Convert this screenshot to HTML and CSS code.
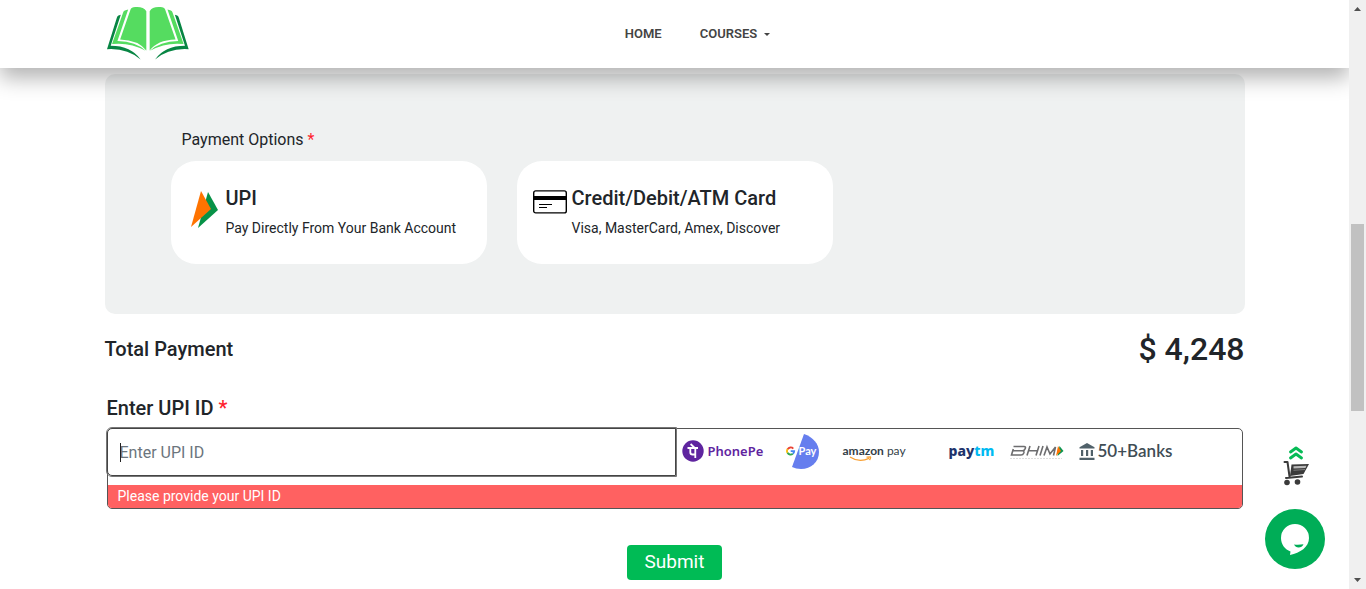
FILE: index.html
```html
<!DOCTYPE html>
<html lang="en">
<head>
<meta charset="utf-8">
<meta name="viewport" content="width=device-width, initial-scale=1">
<title>Checkout</title>
<link rel="stylesheet" href="styles.css">
</head>
<body>
<div class="page">
  <header class="header">
    <div class="container header-row">
      <a class="logo" href="#" aria-label="Home page">
        <svg viewBox="38 18 244 160" width="82" height="54" aria-hidden="true">
          <g>
            <path fill="#55dc60" d="M155 150V33Q146 19 122 21Q110 22 108 28L77 117Q132 119 155 150Z"/>
            <path fill="#55dc60" d="M101 28L91 31Q87 33 86 37L53 131Q106 125 153 151Q125 124 69 122Z"/>
            <path fill="#078543" d="M79 44L72 46Q68 48 67 53L38 146Q98 142 138 177Q110 136 49 136Z"/>
          </g>
          <g transform="translate(319 0) scale(-1 1)">
            <path fill="#55dc60" d="M154 150V33Q146 19 122 21Q110 22 108 28L77 117Q132 119 154 150Z"/>
            <path fill="#55dc60" d="M101 28L91 31Q87 33 86 37L53 131Q106 125 153 151Q125 124 69 122Z"/>
            <path fill="#078543" d="M79 44L72 46Q68 48 67 53L38 146Q98 142 138 177Q110 136 49 136Z"/>
          </g>
        </svg>
      </a>
      <nav class="nav">
        <a href="#">HOME</a>
        <a href="#">COURSES <span class="nav-caret"></span></a>
      </nav>
    </div>
  </header>

  <main class="container">
    <section class="panel">
      <h2 class="panel-label">Payment Options <span class="required">*</span></h2>
      <div class="options">
        <button class="option" type="button">
          <svg class="option-icon upi-icon" viewBox="0 0 27 38" width="27" height="38" aria-hidden="true">
            <path fill="#079247" d="M17 1L27 19L7 37Z"/>
            <path fill="#ff7300" d="M10 0L20 18L0 36Z"/>
          </svg>
          <span class="option-text">
            <span class="option-title">UPI</span>
            <span class="option-note">Pay Directly From Your Bank Account</span>
          </span>
        </button>
        <button class="option option-card" type="button">
          <svg class="option-icon" viewBox="0 0 34 24" width="34" height="24" aria-hidden="true">
            <rect x=".7" y=".9" width="32.6" height="22" rx="2" fill="none" stroke="#000" stroke-width="1.4"/>
            <path fill="#000" d="M1 6h32v4H1z"/>
            <path stroke="#000" stroke-width="1.2" d="M6 14.5h13M6 17.5h8"/>
          </svg>
          <span class="option-text">
            <span class="option-title">Credit/Debit/ATM Card</span>
            <span class="option-note">Visa, MasterCard, Amex, Discover</span>
          </span>
        </button>
      </div>
    </section>

    <section class="total">
      <h2 class="total-label">Total Payment</h2>
      <strong class="total-amount">$ 4,248</strong>
    </section>

    <form class="upi-form">
      <label class="upi-label" for="upi">Enter UPI ID <span class="required">*</span></label>
      <div class="upi-box">
        <div class="upi-row">
          <div class="upi-field">
            <input class="upi-input" id="upi" type="text" placeholder="Enter UPI ID" aria-describedby="upi-error">
            <span class="text-caret"></span>
          </div>
          <div class="brands">
            <span class="brand phonepe">
              <svg viewBox="0 0 22 22" width="22" height="22" aria-hidden="true">
                <circle cx="11" cy="11" r="10.7" fill="#5f259f"/>
                <path fill="none" stroke="#fff" stroke-width="1.8" d="M5.500 8h10.500M8.300 8v4.200q0 2.300 2.300 2.300h3M13.300 8v10M8.600 4l3.800 3.600"/>
              </svg>
              PhonePe
            </span>
            <span class="brand gpay">
              <svg viewBox="0 0 34 36" width="34" height="36" aria-hidden="true">
                <path fill="#667eee" d="M18 1C27 4 33 11 33 19C33 29 25 36 15 36Q10 36 6 34Z"/>
                <g fill="none" stroke-width="1.8">
                  <path stroke="#ea4335" d="M7.300 15.600A3.600 3.600 0 0 0 1.600 16.200"/>
                  <path stroke="#fbbc05" d="M1.600 16.100A3.600 3.600 0 0 0 1.500 19.900"/>
                  <path stroke="#34a853" d="M1.500 19.800A3.600 3.600 0 0 0 6.800 20.800"/>
                  <path stroke="#4285f4" d="M4.700 18.100H8.200Q8.200 19.800 6.800 20.800"/>
                </g>
              </svg>
              <span class="gpay-word">Pay</span>
            </span>
            <span class="brand amazon">
              <span><b>amazon</b> pay</span>
              <svg class="amazon-smile" viewBox="0 0 24 6" width="24" height="6" aria-hidden="true">
                <path fill="none" stroke="#f9a032" stroke-width="1.300" d="M1 1Q10 7 20 2.400M17.500 1.200L21.500 1Q22 2 20.500 4"/>
              </svg>
            </span>
            <span class="brand paytm">pay<span class="paytm-tm">tm</span></span>
            <span class="brand bhim">
              <svg viewBox="0 0 54 18" width="54" height="18" aria-hidden="true">
                <g fill="none" stroke="#6d6d6f" stroke-width="1.600">
                  <path d="M3.500 4.500H14Q16 4.500 15.300 6.500Q14.500 8.800 12.500 8.800H3M12.500 8.800Q14.500 9 13.800 11Q13 13 11 13H1.500L3.300 7"/>
                  <path d="M20 4L17 13.500M29 4L26 13.500M19 8.800H27M33 4L30 13.500M34 13.500L37 5L40 12L45.500 5L43.500 13.500"/>
                </g>
                <path fill="#0a9450" d="M49.500 4L53.500 9L47.500 14Z"/>
                <path fill="#ff7300" d="M48 4L51 9L46 14Z"/>
                <path stroke="#ddd" stroke-dasharray="2 1" d="M0 16.500H52"/>
              </svg>
            </span>
            <span class="brand banks">
              <svg viewBox="0 0 16 17" width="16" height="17" aria-hidden="true">
                <path fill="#50616a" d="M8 0L15.500 4.200V5.500H.5V4.200ZM2 7h2.200v6H2zM7 7h2.200v6H7zM11.800 7H14v6h-2.200zM.5 14.800h15V17H.5z"/>
              </svg>
              50+Banks
            </span>
          </div>
        </div>
        <p class="upi-error" id="upi-error">Please provide your UPI ID</p>
      </div>
      <button class="submit" type="submit">Submit</button>
    </form>
  </main>

  <div class="floating">
    <a class="cart" href="#" aria-label="Cart">
      <svg viewBox="0 0 26 40" width="26" height="40" aria-hidden="true">
        <path fill="none" stroke="#06bb56" stroke-width="2.900" stroke-linecap="round" stroke-linejoin="round" d="M7.500 6L13 2L18.500 6M7.500 12L13 8L18.500 12"/>
        <path fill="none" stroke="#3b3b3b" stroke-width="2" stroke-linecap="round" stroke-linejoin="round" d="M1.500 16H4.500L6.500 30.500M3 32L19 30.500"/>
        <path fill="#3b3b3b" d="M8.500 18.500L26 18L20.500 28L7 30Z"/>
        <path fill="#b9b9b9" d="M10.500 20.300L23.500 19.800L22.500 22L10.500 22.500Z"/>
        <path stroke="#8c8c8c" stroke-width=".8" d="M10.500 24.300L22 23.500"/>
        <circle cx="4" cy="36.500" r="2.800" fill="#3b3b3b"/>
        <circle cx="14.500" cy="36" r="2.800" fill="#3b3b3b"/>
      </svg>
    </a>
    <button class="chat" type="button" aria-label="Open chat">
      <svg viewBox="0 0 60 60" width="60" height="60" aria-hidden="true">
        <path fill="#fff" d="M30 15A14 14 0 0 1 44 29C44 38 35 44 25 46L25.500 42.500C20 40.500 16 35.500 16 29A14 14 0 0 1 30 15Z"/>
        <path fill="#00ad57" d="M29 35.500Q34 36 38.500 35.200Q37 38.500 33.500 38.500Q30.500 38.500 29 35.500Z"/>
      </svg>
    </button>
  </div>
</div>

<div class="scrollbar" aria-hidden="true">
  <svg class="scroll-arrow" viewBox="0 0 7 4" width="7" height="4"><path fill="#505050" d="M3.500 0L7 4H0Z"/></svg>
  <div class="scroll-track"><div class="scroll-thumb"></div></div>
  <svg class="scroll-arrow" viewBox="0 0 7 4" width="7" height="4"><path fill="#505050" d="M0 0H7L3.500 4Z"/></svg>
</div>
</body>
</html>
```
FILE: styles.css
```css
* { box-sizing: border-box; }

body {
  margin: 0;
  display: flex;
  min-height: 100vh;
  background: #fff;
  color: #212529;
  font-family: Roboto, "Liberation Sans", sans-serif;
  font-size: 16px;
  line-height: 24px;
}

h2, p { margin: 0; }
button, input { font-family: inherit; color: inherit; }
svg { display: block; flex: none; }

.page { position: relative; flex: 1; min-width: 0; overflow: hidden; }
.container { width: 100%; max-width: 1140px; margin: 0 auto; }
.required { color: #ff1f2f; }

/* Header */
.header {
  position: relative;
  z-index: 1;
  background: #fff;
  box-shadow: 0 10px 20px rgba(0, 0, 0, .3);
}
.header-row {
  display: grid;
  grid-template-columns: 1fr auto 1fr;
  align-items: center;
  height: 68px;
}
.logo { justify-self: start; padding: 0 0 2px 2px; }
.nav { display: flex; gap: 38px; padding-left: 46px; }
.nav a {
  display: flex;
  align-items: center;
  gap: 7px;
  color: #444;
  font-size: 13px;
  font-weight: 600;
  text-decoration: none;
}
.nav-caret {
  border: 3px solid transparent;
  border-top-color: #444;
  border-bottom: 0;
}

/* Payment options */
.panel {
  margin-top: 6px;
  padding: 54px 66px 50px;
  border-radius: 10px;
  background: #eff1f1;
}
.panel-label {
  padding: 0 11px;
  margin-bottom: 9px;
  font-size: 16px;
  font-weight: 400;
}
.options { display: flex; gap: 30px; }
.option {
  display: flex;
  align-items: flex-start;
  gap: 8px;
  width: 316px;
  padding: 25px 20px 24px;
  border: 0;
  border-radius: 25px;
  background: #fff;
  text-align: left;
}
.option-card { gap: 5px; padding-left: 16px; }
.option-icon { margin-top: 4px; }
.upi-icon { margin-top: 5px; }
.option-text { display: grid; gap: 6px; }
.option-title { font-size: 20px; font-weight: 500; line-height: 24px; }
.option-note { font-size: 14px; line-height: 24px; }

/* Total */
.total {
  display: flex;
  align-items: center;
  justify-content: space-between;
  padding-top: 15px;
}
.total-label { font-size: 20px; font-weight: 500; }
.total-amount { font-size: 32px; font-weight: 500; line-height: 40px; }

/* UPI form */
.upi-form { padding: 27px 2px 0; }
.upi-label { display: block; margin-bottom: 8px; font-size: 20px; font-weight: 500; }
.upi-box { border: 1px solid #555; border-radius: 5px; }
.upi-row {
  display: grid;
  grid-template-columns: 1fr 1fr;
  align-items: center;
  margin-bottom: 9px;
}
.upi-field { position: relative; margin: -1px -1px 0; }
.upi-input {
  display: block;
  width: 100%;
  height: 48px;
  padding: 0 12px;
  border: 1px solid #444;
  border-radius: 5px 0 0 5px;
  outline: 1px solid #777;
  background: #fff;
  font-size: 16px;
}
.upi-input::placeholder { color: #6c757d; opacity: 1; }
.text-caret {
  position: absolute;
  left: 13px;
  top: 15px;
  width: 1px;
  height: 19px;
  background: #222;
}
.upi-error {
  padding: 0 10px;
  border-radius: 0 0 4px 4px;
  background: #ff6161;
  color: #fff;
  font-size: 14px;
  line-height: 23px;
}

/* Accepted apps */
.brands {
  display: grid;
  grid-template-columns: 104px 57px 106px 61px 69px auto;
  align-items: center;
  padding: 0 0 3px 7px;
}
.brand { position: relative; display: flex; align-items: center; white-space: nowrap; }
.phonepe {
  gap: 4px;
  color: #5f259f;
  font-family: "Noto Sans", sans-serif;
  font-size: 13px;
  font-weight: 600;
}
.gpay-word {
  position: absolute;
  left: 13px;
  top: 6px;
  color: #fff;
  font-family: Lato, sans-serif;
  font-size: 11px;
  font-weight: 700;
}
.amazon {
  color: #343e47;
  font-family: Lato, sans-serif;
  font-size: 12px;
}
.amazon b { font-weight: 700; }
.amazon-smile { position: absolute; left: 6px; top: 17px; }
.paytm {
  color: #20336b;
  font-family: "Noto Sans", sans-serif;
  font-size: 14px;
  font-weight: 800;
}
.paytm-tm { color: #00baf2; }
.banks {
  gap: 3px;
  color: #3f4d55;
  font-family: Lato, sans-serif;
  font-size: 17px;
  font-weight: 600;
}

.submit {
  display: block;
  margin: 36px auto 0;
  padding: 0 18px 1px;
  border: 0;
  border-radius: 4px;
  background: #00bb55;
  color: #fff;
  font-size: 19px;
  line-height: 34px;
}

/* Floating shortcuts */
.floating {
  position: absolute;
  right: 24px;
  bottom: 20px;
  display: grid;
  justify-items: center;
  gap: 23px;
}
.cart { padding-left: 2px; }
.chat {
  padding: 0;
  border: 0;
  border-radius: 50%;
  background: #00ad57;
}

/* Scrollbar */
.scrollbar {
  display: flex;
  flex-direction: column;
  align-items: center;
  width: 17px;
  padding: 7px 0;
  background: #f0f0f0;
}
.scroll-track {
  flex: 1;
  display: grid;
  grid-template-rows: 213fr 187fr 167fr;
  width: 13px;
}
.scroll-thumb { grid-row: 2; background: #c1c1c1; }
```
